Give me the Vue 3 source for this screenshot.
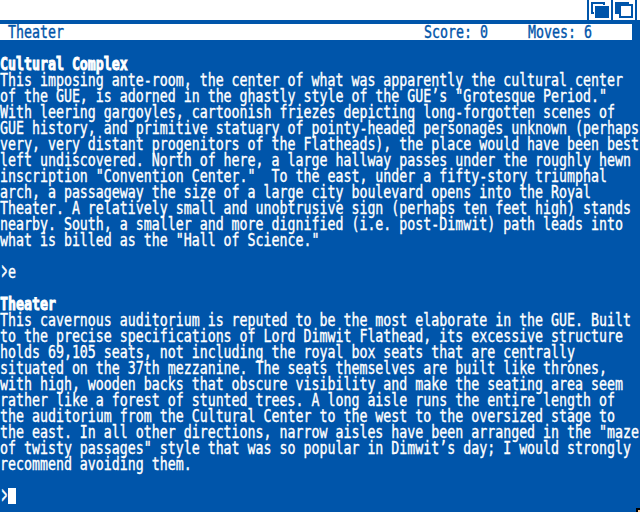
<script setup>
const rooms = [
  {
    title: 'Cultural Complex',
    lines: [
      'This imposing ante-room, the center of what was apparently the cultural center',
      'of the GUE, is adorned in the ghastly style of the GUE’s "Grotesque Period."',
      'With leering gargoyles, cartoonish friezes depicting long-forgotten scenes of',
      'GUE history, and primitive statuary of pointy-headed personages unknown (perhaps',
      'very, very distant progenitors of the Flatheads), the place would have been best',
      'left undiscovered. North of here, a large hallway passes under the roughly hewn',
      'inscription "Convention Center."  To the east, under a fifty-story triumphal',
      'arch, a passageway the size of a large city boulevard opens into the Royal',
      'Theater. A relatively small and unobtrusive sign (perhaps ten feet high) stands',
      'nearby. South, a smaller and more dignified (i.e. post-Dimwit) path leads into',
      'what is billed as the "Hall of Science."',
    ],
    command: 'e',
  },
  {
    title: 'Theater',
    lines: [
      'This cavernous auditorium is reputed to be the most elaborate in the GUE. Built',
      'to the precise specifications of Lord Dimwit Flathead, its excessive structure',
      'holds 69,105 seats, not including the royal box seats that are centrally',
      'situated on the 37th mezzanine. The seats themselves are built like thrones,',
      'with high, wooden backs that obscure visibility and make the seating area seem',
      'rather like a forest of stunted trees. A long aisle runs the entire length of',
      'the auditorium from the Cultural Center to the west to the oversized stage to',
      'the east. In all other directions, narrow aisles have been arranged in the "maze',
      'of twisty passages" style that was so popular in Dimwit’s day; I would strongly',
      'recommend avoiding them.',
    ],
    command: null,
  },
]
</script>

<template>
  <div class="screen">
    <header class="titlebar">
      <svg class="gadgets" width="53" height="20" viewBox="0 0 53 20" shape-rendering="crispEdges">
        <g fill="#0055aa">
          <path d="M0 0h2v20h-2z M24 0h2v20h-2z M48 0h2v20h-2z" />
          <path d="M4 2h14v12h-14z" />
          <path d="M28 2h14v12h-14z" />
        </g>
        <path d="M6 4h10v8h-10z" fill="#fff" />
        <path d="M7 5h15v13h-15z" fill="#fff" />
        <path d="M8 6h14v12h-14z" fill="#0055aa" />
        <path d="M32 4h14v14h-14z" fill="#0055aa" />
        <path d="M34 6h10v10h-10z" fill="#fff" />
      </svg>
    </header>
    <div class="status">
      <span class="text place">Theater</span>
      <span class="text score">Score: 0</span>
      <span class="text moves">Moves: 6</span>
    </div>
    <main class="story">
      <section v-for="room in rooms" :key="room.title" class="room">
        <div class="row"><span class="text bold">{{ room.title }}</span></div>
        <div v-for="line in room.lines" :key="line" class="row"><span class="text">{{ line }}</span></div>
        <div class="row prompt">
          <span class="text chevron">&gt;</span>
          <span v-if="room.command" class="text">{{ room.command }}</span>
          <span v-else class="cursor"></span>
        </div>
      </section>
    </main>
    <div class="pointer"></div>
  </div>
</template>

<style>
body {
  margin: 0;
  background: #0055aa;
}
</style>

<style scoped>
.screen {
  position: relative;
  width: 640px;
  height: 512px;
  overflow: hidden;
  background: #0055aa;
  color: #fff;
  font-family: "DejaVu Sans Mono", monospace;
  font-size: 13.288px;
  line-height: 16px;
}
.titlebar {
  display: flex;
  justify-content: flex-end;
  height: 20px;
  margin-bottom: 4px;
  background: #fff;
}
.gadgets {
  display: block;
}
.status {
  display: grid;
  grid-template-columns: 416px 104px auto;
  box-sizing: border-box;
  width: 632px;
  height: 16px;
  padding-left: 8px;
  background: #fff;
  color: #0055aa;
}
.text {
  display: block;
  height: 16px;
  white-space: pre;
  transform: translateY(0.6px) scaleY(1.32);
  transform-origin: 0 8px;
  -webkit-text-stroke: 0.3px currentColor;
}
.bold {
  font-weight: bold;
  -webkit-text-stroke-width: 0.7px;
}
.chevron {
  width: 8px;
  transform: translateY(-1px) scale(0.65, 1.9);
  transform-origin: 5px 8px;
}
.story {
  padding-top: 16px;
}
.row {
  display: flex;
  height: 16px;
}
.room {
  margin-bottom: 16px;
}
.prompt {
  margin-top: 16px;
}
.cursor {
  width: 8px;
  height: 16px;
  background: #fff;
}
.pointer {
  position: absolute;
  right: 0;
  bottom: 0;
  width: 2px;
  height: 2px;
  border-top: 2px solid #000;
  border-left: 2px solid #000;
  background: #ffcc99;
}
</style>
